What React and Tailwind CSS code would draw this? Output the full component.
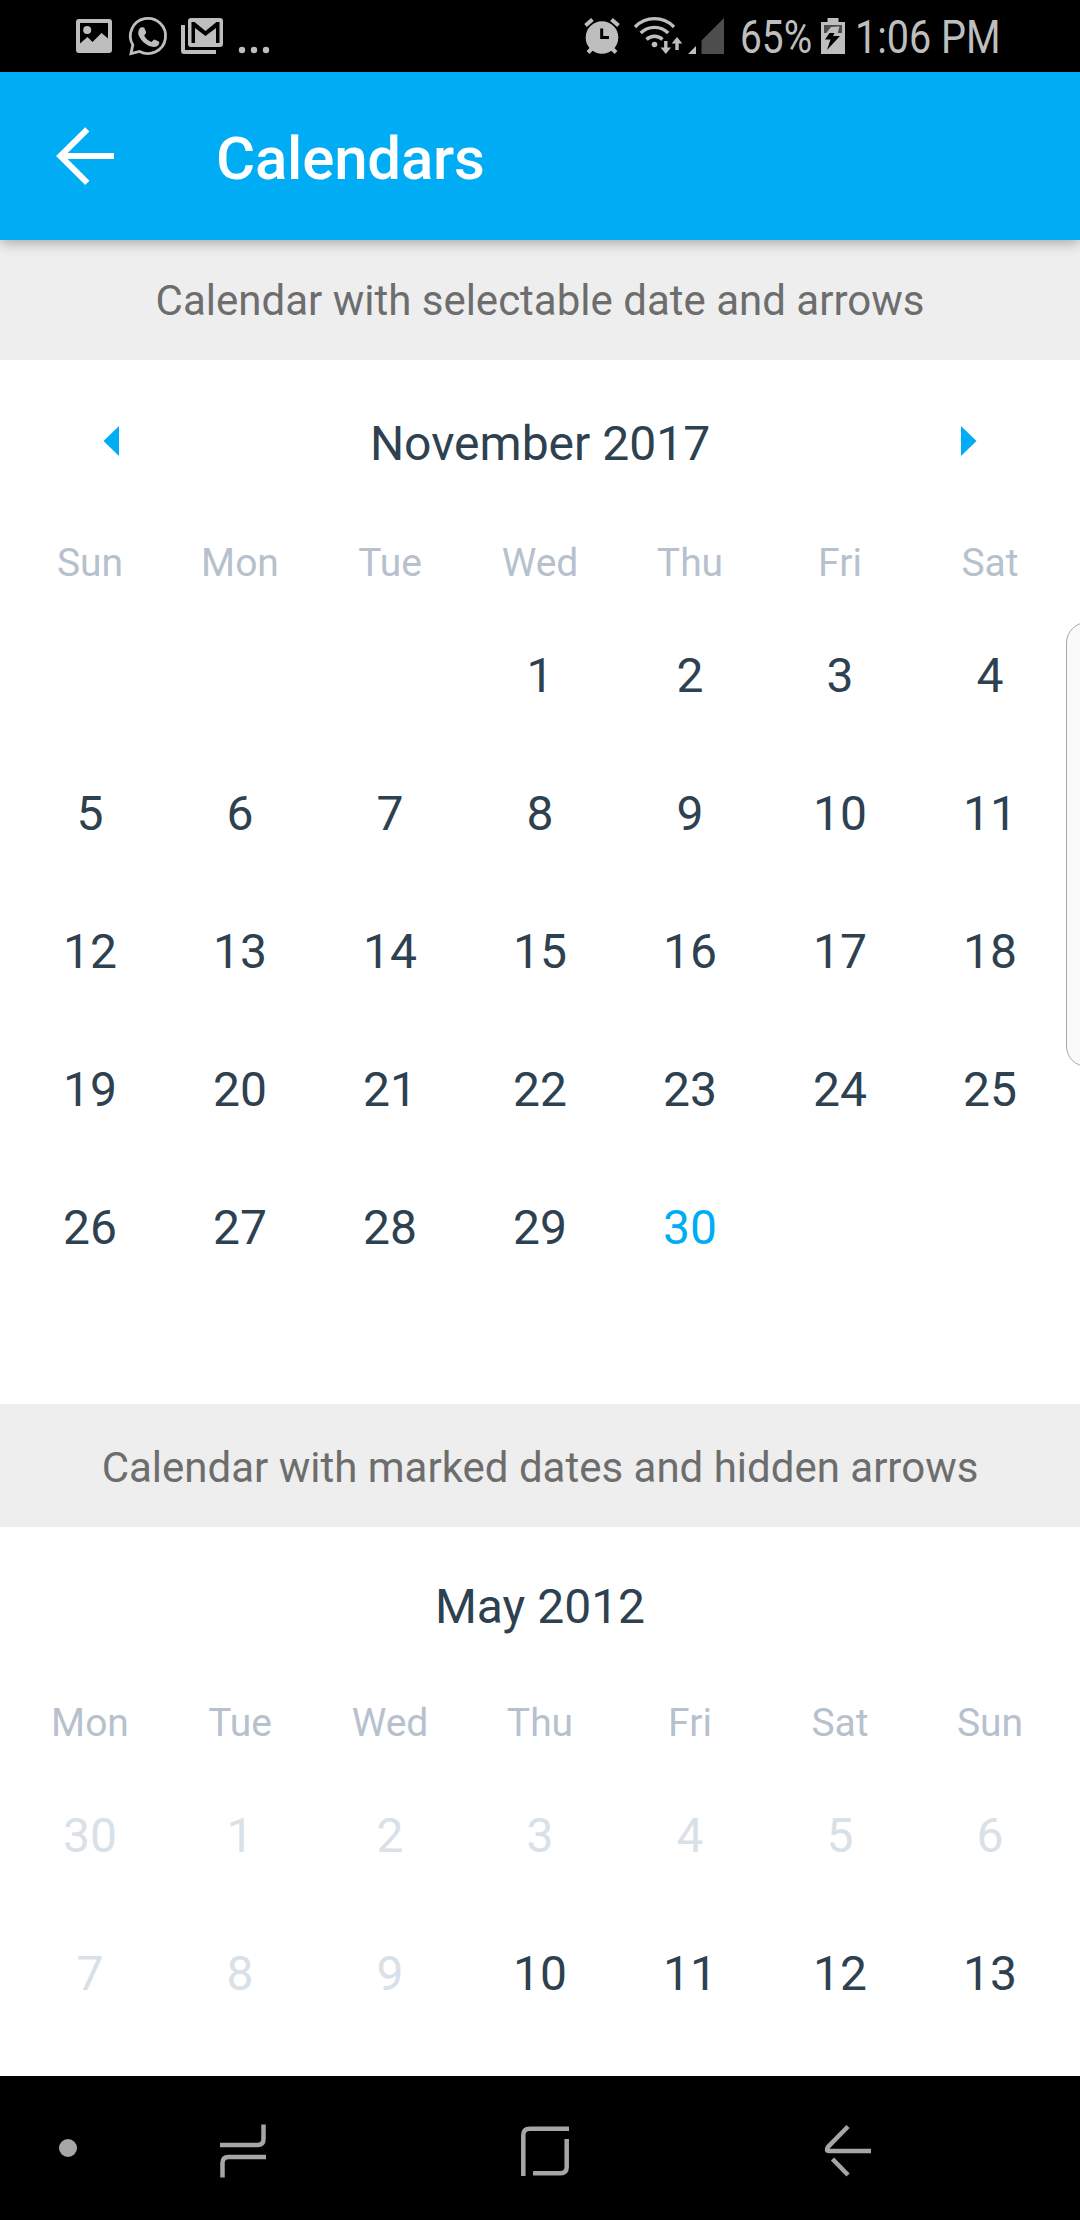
const NOVEMBER = [
  ["", "", "", 1, 2, 3, 4],
  [5, 6, 7, 8, 9, 10, 11],
  [12, 13, 14, 15, 16, 17, 18],
  [19, 20, 21, 22, 23, 24, 25],
  [26, 27, 28, 29, 30, "", ""],
];

const MAY = [
  [30, 1, 2, 3, 4, 5, 6],
  [7, 8, 9, 10, 11, 12, 13],
];

function StatusBar() {
  return (
    <div className="flex h-[72px] shrink-0 items-center bg-black text-[#bebebe]">
      <svg className="h-[72px] w-[280px]" viewBox="0 0 280 72" fill="currentColor">
        <path
          fillRule="evenodd"
          d="M79 19h30a3 3 0 0 1 3 3v28a3 3 0 0 1-3 3H79a3 3 0 0 1-3-3V22a3 3 0 0 1 3-3zm1 4v20.500l7.500-6.500 5 5 9-9 6.500 5.500V23z"
        />
        <circle cx="87.200" cy="30" r="4" />
        <path
          d="M132.800 44.900A17.600 17.600 0 1 1 139.500 51.400L131 53.500z"
          fill="none"
          stroke="currentColor"
          strokeWidth="2.800"
        />
        <path
          transform="translate(1.500 0)"
          d="M139.300 27.500c1.500-.7 3.200-.4 3.800.9l1.500 3.700c.4 1-1.700 3-1.900 3.600 1.600 2.800 4 5 7 6.200.8 0 2.400-2.700 3.300-2.500l4.200 2c.9.400.7 2-.1 3.300-1.400 2-4.600 2.700-7.300 1.900-6-1.600-10.800-6.600-12.700-11.400-1-3 .2-6.500 2.200-7.700z"
        />
        <path d="M181 25h4v25h31v4h-32a3 3 0 0 1-3-3z" />
        <path
          fillRule="evenodd"
          d="M191 18h29a3 3 0 0 1 3 3v23a3 3 0 0 1-3 3h-29a3 3 0 0 1-3-3V21a3 3 0 0 1 3-3zm.5 4v21h3.500V28l10.500 8 10.500-8v15h3.500V22h-3L205.500 31 194.500 22z"
        />
        <circle cx="242" cy="50" r="3.200" />
        <circle cx="254" cy="50" r="3.200" />
        <circle cx="266" cy="50" r="3.200" />
      </svg>
      <svg className="ml-[300px] h-[72px] w-[160px]" viewBox="580 0 160 72" fill="currentColor">
        <circle cx="602" cy="37.500" r="16.300" />
        <path
          d="M585.500 25.500l7-6M618.500 25.500l-7-6M588 52.500l5-5M616 52.500l-5-5"
          stroke="currentColor"
          strokeWidth="4"
        />
        <path d="M601.700 28.500v9h7.300" stroke="#000" strokeWidth="3" fill="none" />
        <g fill="none" stroke="currentColor" strokeWidth="3.400">
          <path d="M635 27a27 27 0 0 1 39 0" />
          <path d="M640.700 33a19.500 19.500 0 0 1 27.500 0" />
          <path d="M646.500 39.500a11.500 11.500 0 0 1 16 0" />
          <path d="M665.800 41v9M677 50v-9" />
        </g>
        <circle cx="654.500" cy="44.500" r="2.800" />
        <path d="M660.500 47.500h10.600l-5.300 6.500zM671.700 43.500h10.600L677 37z" />
        <path d="M696 46v8h-8z" />
        <path d="M701.500 40.500L724 18v36h-22.500z" fill="#4d4d4d" />
      </svg>
      <span className="w-[78px] origin-left scale-x-[0.845] pt-[2px] text-[46px] leading-[72px] whitespace-nowrap">
        65%
      </span>
      <svg className="h-[72px] w-[28px]" viewBox="816 0 28 72">
        <path d="M819 22h6.500v-4h11v4h6.500v32h-24z" fill="currentColor" />
        <path d="M822 25h18v8h-18z" fill="#4d4d4d" />
        <path d="M829 27l-5.500 7h4l3-.5 5 0 2-7z" fill="currentColor" />
        <path d="M827.500 33h5l-1.500 3h7l-13 14 3.500-10.500h-5.500z" fill="#000" />
      </svg>
      <span className="ml-[9px] origin-left scale-x-[0.86] pt-[2px] text-[46px] leading-[72px] whitespace-nowrap">
        1:06 PM
      </span>
    </div>
  );
}

function Header() {
  return (
    <header className="relative z-10 flex h-[168px] shrink-0 items-center bg-[#00adf5] shadow-[0_4px_12px_-1px_rgba(0,0,0,0.3)]">
      <svg className="ml-[54px] h-[62px] w-[62px]" viewBox="54 125 62 62" fill="none" stroke="#fff" strokeWidth="6">
        <path d="M87.300 129.300L60.300 156l27 26.800M61 156h53" />
      </svg>
      <h1 className="ml-[100px] pt-[5px] text-[60px] leading-none font-medium tracking-[-0.2px] text-white">
        Calendars
      </h1>
    </header>
  );
}

function Weekdays({ names }) {
  return (
    <div className="mb-[9px] grid h-[71px] grid-cols-7 px-[15px] pt-px text-center text-[39px] leading-[71px] text-[#b6c1cd]">
      {names.map((name) => (
        <span key={name}>{name}</span>
      ))}
    </div>
  );
}

function Weeks({ weeks, dayColor }) {
  return (
    <div className="grid grid-cols-7 px-[15px] text-center text-[48px] leading-[138px] text-[#2d4150]">
      {weeks.flatMap((week, row) =>
        week.map((day, col) => (
          <span key={`${row}-${col}`} className={`h-[138px] ${dayColor(day)}`}>
            {day}
          </span>
        ))
      )}
    </div>
  );
}

export default function App() {
  return (
    <div className="relative flex h-[2220px] w-[1080px] flex-col overflow-hidden bg-white font-[Roboto,sans-serif]">
      <StatusBar />
      <Header />

      <main className="flex-1">
        <h2 className="h-[120px] bg-[#eeeeee] pt-px text-center text-[42px] leading-[120px] text-[#6d6d6d]">
          Calendar with selectable date and arrows
        </h2>
        <section className="h-[1044px]">
          <div className="flex h-[167px] items-center justify-between px-[103px] text-[48px] text-[#2d4150]">
            <svg className="mb-[5px] h-[30px] w-[16px]" viewBox="0 0 16 30" fill="#00adf5">
              <path d="M16 0v30L0.500 15z" />
            </svg>
            <span>November 2017</span>
            <svg className="mb-[5px] h-[30px] w-[16px]" viewBox="0 0 16 30" fill="#00adf5">
              <path d="M0 0v30L15.500 15z" />
            </svg>
          </div>
          <Weekdays names={["Sun", "Mon", "Tue", "Wed", "Thu", "Fri", "Sat"]} />
          <Weeks weeks={NOVEMBER} dayColor={(day) => (day === 30 ? "text-[#00adf5]" : "")} />
        </section>

        <h2 className="h-[123px] bg-[#eeeeee] pt-[2px] text-center text-[42px] leading-[123px] text-[#6d6d6d]">
          Calendar with marked dates and hidden arrows
        </h2>
        <section>
          <div className="h-[160px] text-center text-[48px] leading-[160px] text-[#2d4150]">May 2012</div>
          <Weekdays names={["Mon", "Tue", "Wed", "Thu", "Fri", "Sat", "Sun"]} />
          <Weeks weeks={MAY} dayColor={(day) => (day < 10 || day === 30 ? "text-[#d9e1e8]" : "")} />
        </section>
      </main>

      <nav className="h-[144px] shrink-0 bg-black">
        <svg className="h-[144px] w-[1080px]" viewBox="0 2076 1080 144" fill="none" stroke="#a6a6a6" strokeWidth="4.500">
          <circle cx="68" cy="2148" r="9" fill="#a6a6a6" stroke="none" />
          <path d="M220 2145h37.500q6 0 6-6v-14.500M266 2157h-37.500q-6 0-6 6v14.500" />
          <path d="M523.300 2176v-41q0-6.300 6.300-6.300H569M566.700 2139v28q0 6.300-6.300 6.300H533" />
          <path d="M848 2126.500l-20 20.500q-2.500 4 1 4h42M832.500 2159l15.500 16" />
        </svg>
      </nav>

      {/* Edge panel handle, floating over the right side of the screen */}
      <div className="absolute top-[622px] -right-[30px] h-[445px] w-[44px] rounded-[21px] border-[1.500px] border-[#a8a8a8] bg-[#fafafa]" />
    </div>
  );
}
